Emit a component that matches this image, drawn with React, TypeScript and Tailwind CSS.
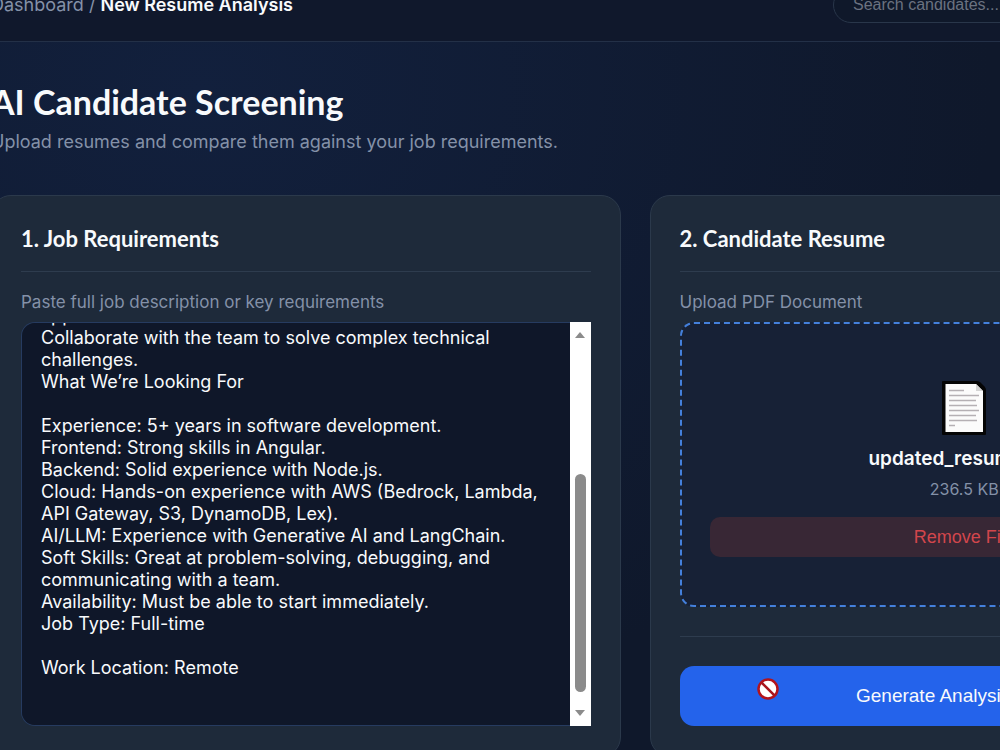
import { useEffect, useRef, useState } from "react";

const JOB_DESCRIPTION = `Build and maintain full-stack features for our web and AI products, and keep
applications.
Collaborate with the team to solve complex technical challenges.
What We’re Looking For

Experience: 5+ years in software development.
Frontend: Strong skills in Angular.
Backend: Solid experience with Node.js.
Cloud: Hands-on experience with AWS (Bedrock, Lambda, API Gateway, S3, DynamoDB, Lex).
AI/LLM: Experience with Generative AI and LangChain.
Soft Skills: Great at problem-solving, debugging, and communicating with a team.
Availability: Must be able to start immediately.
Job Type: Full-time

Work Location: Remote
`;

const PageIcon = () => (
  <svg viewBox="0 0 44 56" className="h-[56px] w-[44px]" aria-hidden="true">
    <path d="M1 1h34q2 0 3.5 1.5l4 4q1.5 1.5 1.5 3.5v44q0 1-1 1H1q-1 0-1-1V2q0-1 1-1z" fill="#050505" />
    <path d="M3.5 4h30.5l7 7v41H3.5z" fill="#fbfbfb" />
    <path d="M34 4v7h7z" fill="#d4d4d4" />
    <path
      d="M7 10.5h15M7 15.5h30M7 20.5h27M7 25.5h28M7 30.5h30M7 35.5h27M7 40.5h28M7 45.5h6"
      stroke="#b5b0b4"
      strokeWidth="1.7"
    />
  </svg>
);

const BlockedCursor = () => (
  <svg
    viewBox="0 0 22 22"
    className="pointer-events-none absolute left-[77px] top-[12px] h-[22px] w-[22px]"
    aria-hidden="true"
  >
    <circle cx="11" cy="11" r="9.5" fill="#fff" stroke="#b3131c" strokeWidth="2.5" />
    <path d="M4.6 4.6l12.8 12.8" stroke="#a8141c" strokeWidth="2.6" />
  </svg>
);

const Scrollbar = () => (
  <div className="flex w-[21px] shrink-0 flex-col items-center bg-white py-[10px]" aria-hidden="true">
    <svg viewBox="0 0 10 6" className="h-[6px] w-[10px]">
      <path d="M5 0l5 6H0z" fill="#8b8b8b" />
    </svg>
    <div className="flex-1" />
    <div className="h-[218px] w-[11px] rounded-full bg-[#8b8b8b]" />
    <svg viewBox="0 0 10 6" className="mt-[18px] h-[6px] w-[10px]">
      <path d="M0 0h10L5 6z" fill="#8b8b8b" />
    </svg>
  </div>
);

const CardTitle = ({ children }: { children: string }) => (
  <h2 className="mb-5 border-b border-[#2e3c4e] pb-4 font-['Lato',sans-serif] text-[22px] font-bold leading-8 text-slate-50">
    {children}
  </h2>
);

export default function App() {
  const [description, setDescription] = useState(JOB_DESCRIPTION);
  const areaRef = useRef<HTMLTextAreaElement>(null);

  useEffect(() => {
    if (areaRef.current) {
      areaRef.current.scrollTop = areaRef.current.scrollHeight;
    }
  }, []);

  return (
    <div className="h-screen overflow-hidden bg-[#0f172a] bg-[radial-gradient(ellipse_at_20%_12%,#12203d_0%,#0f182b_70%)] font-['Inter',sans-serif] text-slate-50">
      <div className="-ml-[9px] -mr-[279px] -mt-8">
        <header className="flex h-[74px] items-center justify-between border-b border-[#233047] bg-[#10182c]">
          <nav className="text-[18px] leading-6 text-[#8491a8]">
            <a href="#dashboard">Dashboard</a> /{" "}
            <span className="font-semibold text-slate-50">New Resume Analysis</span>
          </nav>
          <input
            type="search"
            aria-label="Search candidates"
            placeholder="Search candidates..."
            className="h-9 w-[446px] rounded-full border border-[#29364a] bg-[#0f182a] px-[19px] font-['Liberation_Sans',sans-serif] text-[16px] text-slate-50 placeholder:text-[#6b7280]"
          />
        </header>

        <main className="pt-[38px]">
          <h1 className="font-['Lato',sans-serif] text-[34px] font-bold leading-[44px]">
            AI Candidate Screening
          </h1>
          <p className="mt-[6px] text-[18px] leading-6 text-[#8491a8]">
            Upload resumes and compare them against your job requirements.
          </p>

          <div className="mt-[41px] grid grid-cols-2 gap-[29px]">
            <section className="flex flex-col rounded-[20px] border border-[#2b394b] bg-[#1e2a3a] px-[29px] pb-[30px] pt-[27px]">
              <CardTitle>1. Job Requirements</CardTitle>
              <label htmlFor="job" className="mb-[10px] text-[17px] leading-5 text-[#8491a8]">
                Paste full job description or key requirements
              </label>
              <div className="flex flex-1">
                <textarea
                  id="job"
                  ref={areaRef}
                  value={description}
                  onChange={(e) => setDescription(e.target.value)}
                  className="min-w-0 flex-1 resize-none rounded-l-[14px] border-y border-l border-[#263b60] bg-[#0f1729] px-[19px] py-6 text-[18px] leading-[22px] text-slate-50 outline-none [scrollbar-width:none]"
                />
                <Scrollbar />
              </div>
            </section>

            <section className="flex flex-col rounded-[20px] border border-[#2b394b] bg-[#1e2a3a] px-[29px] pb-[30px] pt-[27px]">
              <CardTitle>2. Candidate Resume</CardTitle>
              <p className="mb-[10px] text-[17px] leading-5 text-[#8491a8]">
                Upload PDF Document
              </p>
              <div className="flex flex-col items-center rounded-[14px] border-2 border-dashed border-[#4480dc] bg-[#172136] px-7 pb-12 pt-14">
                <PageIcon />
                <p className="mt-[9px] text-[19px] font-semibold leading-7">updated_resume.pdf</p>
                <p className="mt-[6px] text-[16px] leading-5 text-[#8491a8]">236.5 KB</p>
                <button
                  type="button"
                  className="mt-[18px] h-10 w-full rounded-[10px] bg-[#382735] font-['Liberation_Sans',sans-serif] text-[18px] text-[#d2464c]"
                >
                  Remove File
                </button>
              </div>
              <div className="mt-[29px] border-t border-[#2e3c4e] pt-[29px]">
                <button
                  type="button"
                  className="relative h-[60px] w-full cursor-not-allowed rounded-[14px] bg-[#2463eb] font-['Liberation_Sans',sans-serif] text-[19px] text-slate-50"
                >
                  Generate Analysis Report
                  <BlockedCursor />
                </button>
              </div>
            </section>
          </div>
        </main>
      </div>
    </div>
  );
}
